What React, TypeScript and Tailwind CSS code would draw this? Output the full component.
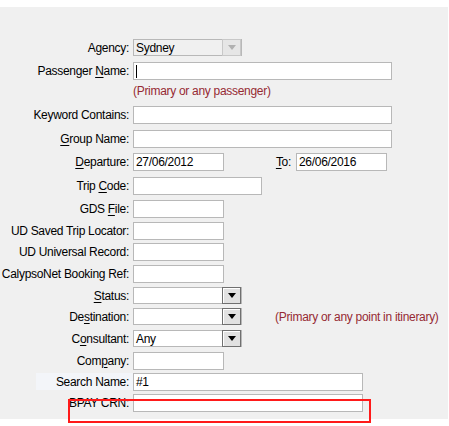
import React from "react";

const U = ({ c }: { c: string }) => <span className="underline underline-offset-[2px]">{c}</span>;

function Label({ children, hl }: { children: React.ReactNode; hl?: boolean }) {
  return (
    <div className="w-[133px] shrink-0 flex justify-end">
      <div className={`h-[17px] flex items-center justify-end pr-[4px] whitespace-nowrap ${hl ? "bg-[#f3f5f9] w-[97px]" : ""}`}>
        <span>{children}</span>
      </div>
    </div>
  );
}

function Input({ w, value, cursor, disabled }: { w: number; value?: string; cursor?: boolean; disabled?: boolean }) {
  return (
    <div
      className={`h-[18px] border border-[#b8b8b8] flex items-center pl-[2px] shrink-0 ${disabled ? "bg-[#f0f0f0]" : "bg-white"}`}
      style={{ width: w }}
    >
      {cursor && <div className="w-[1px] h-[13px] bg-black" />}
      {value && <span>{value}</span>}
    </div>
  );
}

function Arrow({ disabled }: { disabled?: boolean }) {
  return (
    <div
      className={`h-[17px] w-[19px] ml-auto flex items-center justify-center border ${disabled ? "border-[#c8c8c8] bg-[#e6e6e6]" : "border-[#707070] bg-[#e1e1e1] shadow-[inset_1px_1px_0_#fff]"}`}
    >
      <svg width="8" height="5" viewBox="0 0 8 5">
        <polygon points="0,0 8,0 4,5" fill={disabled ? "#b0b0b0" : "#000"} />
      </svg>
    </div>
  );
}

function Select({ value, disabled }: { value?: string; disabled?: boolean }) {
  return (
    <div className={`h-[17px] w-[109px] shrink-0 flex items-center border border-[#b8b8b8] ${disabled ? "bg-[#f0f0f0]" : "bg-white"}`}>
      <span className="pl-[2px]">{value}</span>
      <Arrow disabled={disabled} />
    </div>
  );
}

function Row({ h, children }: { h: number; children: React.ReactNode }) {
  return (
    <div className="flex items-start shrink-0" style={{ height: h }}>
      {children}
    </div>
  );
}

export default function App() {
  return (
    <div className="w-[449px] h-[426px] bg-white text-[12px] tracking-[-0.3px] text-black overflow-hidden" style={{ fontFamily: '"Liberation Sans", Arial, sans-serif' }}>
      <div className="h-[7px]" />
      <div className="relative w-[448px] h-[412px] bg-[#f0f0f0] pt-[32px] flex flex-col">
        <Row h={23}>
          <Label>Agency:</Label>
          <div className="flex items-center h-[17px] w-[109px] border border-[#b8b8b8] bg-[#f0f0f0]">
            <span className="pl-[2px]">Sydney</span>
            <Arrow disabled />
          </div>
        </Row>
        <Row h={44}>
          <Label>Passenger <U c="N" />ame:</Label>
          <div className="flex flex-col">
            <Input w={259} cursor />
            <div className="mt-[3px] h-[16px] flex items-center text-[#962a33] whitespace-nowrap">(Primary or any passenger)</div>
          </div>
        </Row>
        <Row h={24}>
          <Label>Keyword Contains:</Label>
          <Input w={259} />
        </Row>
        <Row h={23}>
          <Label><U c="G" />roup Name:</Label>
          <Input w={259} />
        </Row>
        <Row h={24}>
          <Label><U c="D" />eparture:</Label>
          <Input w={91} value="27/06/2012" />
          <div className="w-[72px] h-[18px] flex items-center justify-end pr-[5px]"><span><U c="T" />o:</span></div>
          <Input w={91} value="26/06/2016" />
        </Row>
        <Row h={23}>
          <Label>Trip <U c="C" />ode:</Label>
          <Input w={129} />
        </Row>
        <Row h={22}>
          <Label>GDS <U c="F" />ile:</Label>
          <Input w={91} />
        </Row>
        <Row h={21}>
          <Label>UD Saved Trip Locator:</Label>
          <Input w={91} />
        </Row>
        <Row h={22}>
          <Label>UD Universal Record:</Label>
          <Input w={91} />
        </Row>
        <Row h={22}>
          <Label>CalypsoNet Booking Ref:</Label>
          <Input w={91} />
        </Row>
        <Row h={21}>
          <Label><U c="S" />tatus:</Label>
          <Select />
        </Row>
        <Row h={22}>
          <Label>De<U c="s" />tination:</Label>
          <Select />
          <div className="ml-[33px] h-[17px] flex items-center text-[#962a33] whitespace-nowrap">(Primary or any point in itinerary)</div>
        </Row>
        <Row h={22}>
          <Label>C<U c="o" />nsultant:</Label>
          <Select value="Any" />
        </Row>
        <Row h={21}>
          <Label>Com<U c="p" />any:</Label>
          <Input w={91} />
        </Row>
        <Row h={21}>
          <Label hl>Search Name:</Label>
          <Input w={230} value="#1" />
        </Row>
        <Row h={20}>
          <Label>BPAY CRN:</Label>
          <Input w={230} />
        </Row>
        <div className="absolute left-[68px] top-[392px] w-[303px] h-[24px] border-2 border-[#ff1a1a]" />
      </div>
    </div>
  );
}
